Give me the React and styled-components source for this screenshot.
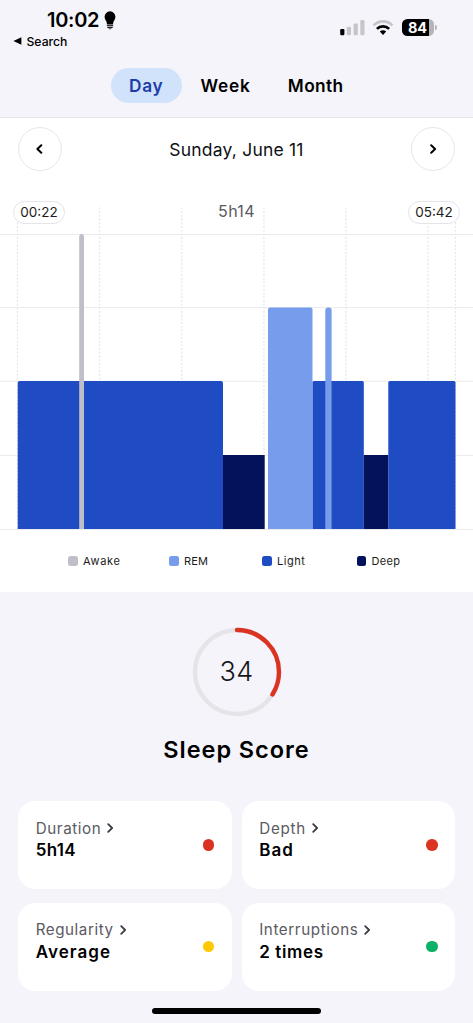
import { useState } from "react";
import styled, { createGlobalStyle } from "styled-components"

const cores = { awake: "#bfbfc9", rem: "#769ceb", light: "#1f4bc3", deep: "#04125b" }

const periods = [
    { name: "Day", space: "0.6px" },
    { name: "Week", space: "0.8px" },
    { name: "Month", space: "0.4px" }
]

// x, width, top and corner radius of each sleep phase inside the chart
const phases = [
    { type: "light", x: 17.7, w: 205.3, y: 180, r: 2 },
    { type: "deep", x: 223, w: 41.7, y: 254, r: 0 },
    { type: "light", x: 312.4, w: 51.4, y: 180, r: 1.5 },
    { type: "rem", x: 268, w: 44.5, y: 106.4, r: 2 },
    { type: "deep", x: 363.8, w: 24.6, y: 254, r: 0 },
    { type: "light", x: 388.3, w: 67.2, y: 180, r: 1.5 },
    { type: "awake", x: 79.2, w: 4.8, y: 33, r: 2.4 },
    { type: "rem", x: 325.3, w: 6.3, y: 106.4, r: 2.8 }
]

const legend = [
    { name: "Awake", type: "awake", space: "0.65px" },
    { name: "REM", type: "rem", space: "0.2px" },
    { name: "Light", type: "light", space: "0.5px" },
    { name: "Deep", type: "deep", space: "0.35px" }
]

const stats = [
    { name: "Duration", value: "5h14", color: "#da3322", space: "0.6px", valueSpace: "0.3px" },
    { name: "Depth", value: "Bad", color: "#da3322", space: "0.75px", valueSpace: "1px" },
    { name: "Regularity", value: "Average", color: "#fec804", space: "0.55px", valueSpace: "1.05px" },
    { name: "Interruptions", value: "2 times", color: "#0db269", space: "0.6px", valueSpace: "0.65px" }
]

function StatusBar() {
    return (
        <Status>
            <div>
                <Clock>
                    <span>10:02</span>
                    <svg width="12" height="19" viewBox="0 0 12 19">
                        <path d="M6 0.3a5.4 5.4 0 0 0-5.4 5.4c0 2.3 1.1 3.3 1.8 4.8.4 1 .5 2 .6 3h6c.1-1 .2-2 .6-3 .7-1.5 1.8-2.5 1.8-4.8A5.4 5.4 0 0 0 6 .3z" />
                        <path d="M3.2 14.7h5.6M3.7 16.4h4.6" stroke="#000" strokeWidth="1" strokeLinecap="round" />
                        <path d="M4.2 17.5h3.6c-.5.9-3.1.9-3.6 0z" />
                    </svg>
                </Clock>
                <Back>
                    <svg width="9" height="8" viewBox="0 0 9 8"><path d="M8.4 0.3v7.4L0.4 4z" /></svg>
                    <span>Search</span>
                </Back>
            </div>
            <Indicators>
                <svg width="26" height="17" viewBox="0 0 26 17">
                    <rect x="1.2" y="10" width="4.2" height="6.2" rx="1.2" />
                    <rect x="7.8" y="7.8" width="4.2" height="8.4" rx="1.2" fill="#c6c6ca" />
                    <rect x="14.6" y="4.4" width="4.2" height="11.8" rx="1.2" fill="#c6c6ca" />
                    <rect x="21.3" y="1" width="4.2" height="15.2" rx="1.2" fill="#c6c6ca" />
                </svg>
                <svg width="22" height="17" viewBox="0 0 22 17" fill="none">
                    <path d="M1.6 6.4C6.8 1 15.2 1 20.4 6.4" stroke="#c6c6ca" strokeWidth="2.7" />
                    <path d="M4.9 9.9c3.4-3.5 8.8-3.5 12.2 0" stroke="#000" strokeWidth="2.7" />
                    <path d="M7.8 12.5c1.8-1.7 4.6-1.7 6.4 0L11 15.9z" fill="#000" />
                </svg>
                <Battery><b>84</b></Battery>
            </Indicators>
        </Status>
    )
}

function Chevron({ size = 10, width = 2, left }) {
    return (
        <svg width={size} height={size} viewBox="0 0 10 10" fill="none" stroke="currentColor" strokeWidth={width} strokeLinecap="round" strokeLinejoin="round">
            <path d={left ? "M6.3 1.2L2.4 5l3.9 3.8" : "M3.2 1.2L7.1 5 3.2 8.8"} />
        </svg>
    )
}

// only the top corners are rounded
function Bar({ type, x, y, w, r }) {
    return <path fill={cores[type]} d={`M${x} 327.9V${y + r}q0 ${-r} ${r} ${-r}h${w - 2 * r}q${r} 0 ${r} ${r}V327.9z`} />
}

function SleepChart() {
    return (
        <Chart>
            <svg width="473" height="331" viewBox="0 0 473 331">
                {[17.5, 99.6, 181.7, 263.9, 346, 428, 455.5].map((x) => <line key={x} x1={x} x2={x} y1="6.5" y2="328" stroke="#e6e6ea" strokeWidth="1.3" strokeDasharray="1.9 1.8" />)}
                {[33.5, 106.5, 180.3, 254.4, 328.5].map((y) => <line key={y} x1="0" x2="473" y1={y} y2={y} stroke="#ebebed" />)}
                {phases.map((p) => <Bar key={p.x} {...p} />)}
            </svg>
            <ChartLabels>
                <Time>00:22</Time>
                <Total>5h14</Total>
                <Time>05:42</Time>
            </ChartLabels>
        </Chart>
    )
}

export default function App() {
    const [period, setPeriod] = useState("Day")

    return (
        <>
            <GlobalStyle />
            <Screen>
                <Header>
                    <StatusBar />
                    <Tabs>
                        {periods.map((p) => <Tab key={p.name} $active={p.name === period} $space={p.space} onClick={() => setPeriod(p.name)}>{p.name}</Tab>)}
                    </Tabs>
                </Header>
                <Panel>
                    <DateRow>
                        <Round aria-label="Previous"><Chevron left /></Round>
                        <DateText>Sunday, June 11</DateText>
                        <Round aria-label="Next"><Chevron /></Round>
                    </DateRow>
                    <SleepChart />
                    <Legend>
                        {legend.map((l) => <LegendItem key={l.name} $color={cores[l.type]} $space={l.space}>{l.name}</LegendItem>)}
                    </Legend>
                </Panel>
                <Score>
                    <Ring>
                        <svg width="90" height="90" viewBox="0 0 90 90" fill="none" strokeWidth="4.4">
                            <circle cx="45" cy="45" r="42" stroke="#e4e4e9" />
                            <circle cx="45" cy="45" r="42" stroke="#da3322" strokeLinecap="round" pathLength="100" strokeDasharray="34 66" transform="rotate(-90 45 45)" />
                        </svg>
                        <ScoreNumber>34</ScoreNumber>
                    </Ring>
                    <Title>Sleep Score</Title>
                </Score>
                <Cards>
                    {stats.map((s) => (
                        <Card key={s.name}>
                            <div>
                                <CardName $space={s.space}><span>{s.name}</span><Chevron width={1.8} /></CardName>
                                <CardValue $space={s.valueSpace}>{s.value}</CardValue>
                            </div>
                            <Dot $color={s.color} />
                        </Card>
                    ))}
                </Cards>
                <HomeBar />
            </Screen>
        </>
    )
}

const GlobalStyle = createGlobalStyle`
    * {
        box-sizing: border-box;
    }
    body {
        margin: 0;
        background: #f5f4fa;
        color: #000000;
        font-family: Inter, "Liberation Sans", sans-serif;
    }
    button {
        font-family: inherit;
        color: inherit;
        border: none;
        padding: 0;
    }
    svg {
        display: block;
        flex-shrink: 0;
    }
`

const Screen = styled.div`
    width: 473px;
    height: 1023px;
    overflow: hidden;
    display: flex;
    flex-direction: column;
`

const Header = styled.header`
    height: 118px;
    border-bottom: 1px solid #e4e4e9;
    flex-shrink: 0;
`

const Status = styled.div`
    height: 67.5px;
    display: flex;
    justify-content: space-between;
    padding: 10px 36px 0 13px;
`

const Clock = styled.div`
    display: flex;
    align-items: center;
    gap: 5px;
    height: 20px;
    padding-left: 34px;
    font-size: 20px;
    font-weight: 600;
    letter-spacing: -0.3px;
    span {
        width: 52px;
        white-space: nowrap;
    }
`

const Back = styled.div`
    display: flex;
    align-items: center;
    gap: 4.5px;
    height: 14px;
    margin-top: 4px;
    font-size: 12.2px;
    font-weight: 500;
`

const Indicators = styled.div`
    display: flex;
    align-items: center;
    height: 17px;
    margin-top: 9px;
    gap: 7px;
`

const Battery = styled.div`
    position: relative;
    width: 32px;
    height: 17px;
    margin: 0 3px 0 1px;
    padding-right: 1px;
    border-radius: 5.5px;
    background: linear-gradient(90deg, #000000 27px, #b4b4b8 27px);
    color: #ffffff;
    font-size: 14.5px;
    line-height: 17px;
    text-align: center;
    &::after {
        content: "";
        position: absolute;
        left: 33px;
        top: 6px;
        width: 2px;
        height: 5px;
        border-radius: 0 2px 2px 0;
        background: #b4b4b8;
    }
`

const Tabs = styled.nav`
    display: flex;
    padding-left: 110.5px;
`

const Tab = styled.button`
    height: 35px;
    padding: 0 18.6px;
    border-radius: 18px;
    background: ${(p) => p.$active ? "#d1e3fb" : "transparent"};
    color: ${(p) => p.$active ? "#1e3ca9" : "#000000"};
    font-size: 17.3px;
    font-weight: 600;
    letter-spacing: ${(p) => p.$space};
`

const Panel = styled.main`
    height: 473.5px;
    background: #ffffff;
    flex-shrink: 0;
`

const DateRow = styled.div`
    display: flex;
    align-items: center;
    justify-content: space-between;
    height: 44px;
    margin: 9px 18px 30px;
`

const Round = styled.button`
    width: 44px;
    height: 44px;
    border: 1px solid #e7e7e9;
    border-radius: 50%;
    background: #ffffff;
    display: flex;
    align-items: center;
    justify-content: center;
`

const DateText = styled.span`
    font-size: 17.5px;
    color: #101014;
    letter-spacing: 0.2px;
`

const Chart = styled.div`
    display: grid;
    height: 331px;
    > * {
        grid-area: 1 / 1;
    }
`

const ChartLabels = styled.div`
    display: flex;
    justify-content: space-between;
    align-items: center;
    height: 22px;
    padding: 0 13px;
    z-index: 1;
`

const Time = styled.span`
    width: 52px;
    height: 23px;
    border: 1px solid #e4e4e9;
    border-radius: 12px;
    background: #ffffff;
    color: #1c1c20;
    font-size: 13.5px;
    line-height: 21px;
    text-align: center;
`

const Total = styled.span`
    padding-bottom: 2px;
    font-size: 16px;
    letter-spacing: 0.4px;
    color: #5a5a62;
`

const Legend = styled.div`
    display: grid;
    grid-template-columns: 101px 93px 94.5px 60px;
    padding: 22px 0 0 68px;
`

const LegendItem = styled.span`
    display: flex;
    align-items: center;
    gap: 5.5px;
    height: 14px;
    font-size: 11px;
    color: #1c1c20;
    letter-spacing: ${(p) => p.$space};
    &::before {
        content: "";
        width: 9.5px;
        height: 9.5px;
        border-radius: 2.5px;
        background: ${(p) => p.$color};
    }
`

const Score = styled.section`
    height: 209.5px;
    padding-top: 35.5px;
    display: flex;
    flex-direction: column;
    align-items: center;
    flex-shrink: 0;
`

const Ring = styled.div`
    display: grid;
    place-items: center;
    > * {
        grid-area: 1 / 1;
    }
`

const ScoreNumber = styled.span`
    padding-bottom: 1px;
    font-size: 27px;
    font-weight: 300;
    letter-spacing: 0.3px;
    color: #18181c;
`

const Title = styled.h1`
    margin: 18px 0 0;
    font-size: 23.5px;
    line-height: 30px;
    font-weight: 600;
    letter-spacing: 0.95px;
`

const Cards = styled.section`
    display: grid;
    grid-template-columns: 1fr 1fr;
    grid-auto-rows: 88px;
    gap: 13.5px 10px;
    padding: 0 18px;
`

const Card = styled.article`
    display: flex;
    justify-content: space-between;
    align-items: center;
    padding: 0 17.4px 0 17.7px;
    border-radius: 17px;
    background: #ffffff;
    > div:first-child {
        align-self: flex-start;
        padding-top: 17px;
    }
`

const CardName = styled.div`
    display: flex;
    align-items: center;
    gap: 4px;
    height: 20px;
    color: #3c3c44;
    font-size: 15.2px;
    letter-spacing: ${(p) => p.$space};
    span {
        color: #5a5a62;
    }
`

const CardValue = styled.div`
    height: 24px;
    line-height: 24px;
    font-size: 17px;
    font-weight: 600;
    letter-spacing: ${(p) => p.$space};
`

const Dot = styled.div`
    width: 11.4px;
    height: 11.4px;
    border-radius: 50%;
    background: ${(p) => p.$color};
`

const HomeBar = styled.div`
    width: 169px;
    height: 6px;
    margin: 17.5px auto 0;
    border-radius: 3px;
    background: #000000;
`
